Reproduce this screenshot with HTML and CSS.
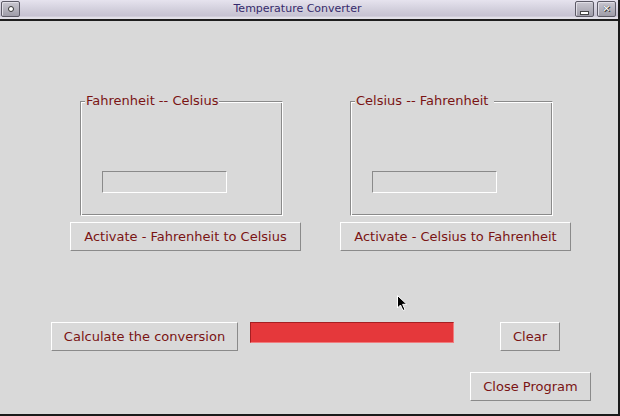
FILE: index.html
```html
<!DOCTYPE html>
<html>
<head>
<meta charset="utf-8">
<link rel="stylesheet" href="styles.css">
</head>
<body>
<div class="window">
  <div class="titlebar">
    <div class="tb-btn tb-menu"><span class="dot"></span></div>
    <div class="title">Temperature Converter</div>
    <div class="tb-right">
      <div class="tb-btn"><span class="minbar"></span></div>
      <div class="tb-btn"><span class="xmark">✕</span></div>
    </div>
  </div>
  <div class="content">
    <div class="row-frames">
      <div class="col">
        <div class="lframe">
          <span class="legend">Fahrenheit -- Celsius</span>
          <div class="entry"></div>
        </div>
        <div class="btn btn-wide">Activate - Fahrenheit to Celsius</div>
      </div>
      <div class="col">
        <div class="lframe">
          <span class="legend">Celsius -- Fahrenheit&nbsp;</span>
          <div class="entry"></div>
        </div>
        <div class="btn btn-wide">Activate - Celsius to Fahrenheit</div>
      </div>
    </div>
    <div class="row-calc">
      <div class="btn btn-calc">Calculate the conversion</div>
      <div class="result"></div>
      <div class="btn btn-clear">Clear</div>
    </div>
    <div class="row-close">
      <div class="btn btn-close">Close Program</div>
    </div>
    <svg class="cursor" width="12" height="18" viewBox="0 0 12 18">
      <path d="M0.5 0.5 L0.5 13 L3.5 10 L6 15.5 L8 14.5 L5.6 9.3 L9.8 9.3 Z" fill="#000" stroke="#fff" stroke-width="1"/>
    </svg>
  </div>
</div>
</body>
</html>
```
FILE: styles.css
```css
html, body {
  margin: 0;
  padding: 0;
  background: #d9d9d9;
}
.window {
  width: 620px;
  height: 416px;
  box-sizing: border-box;
  border-right: 2px solid #1a1a1a;
  border-bottom: 2px solid #1a1a1a;
  background: #d9d9d9;
  font-family: "DejaVu Sans", sans-serif;
  position: relative;
  overflow: hidden;
}
.titlebar {
  height: 21px;
  box-sizing: border-box;
  background: linear-gradient(#e6e3ee, #d2cfdc 50%, #c6c2d2 85%, #e2e0e8 90%);
  border-bottom: 2px solid #1e1e1e;
  display: flex;
  align-items: flex-start;
  padding: 1px 2px 0 1px;
}
.title {
  flex: 1;
  text-align: center;
  font-size: 11px;
  color: #352a6c;
  line-height: 16px;
}
.tb-right {
  display: flex;
  gap: 3px;
}
.tb-btn {
  width: 19px;
  height: 16px;
  box-sizing: border-box;
  border: 1px solid #5c5a66;
  border-radius: 2px;
  background: linear-gradient(#c9c7d0, #9e9ca8);
  display: flex;
  align-items: center;
  justify-content: center;
  box-shadow: inset 1px 1px 0 #e0dee6;
}
.dot {
  width: 4px;
  height: 4px;
  border: 1px solid #333;
  border-radius: 50%;
  background: #fff;
}
.minbar {
  width: 7px;
  height: 2px;
  background: #fff;
  margin-top: 7px;
  box-shadow: 0 0 0 1px #444;
}
.xmark {
  color: #fff;
  font-size: 10px;
  font-weight: bold;
  line-height: 1;
  text-shadow: 0 0 1px #222, 1px 1px 0 #333;
}
.content {
  position: relative;
  height: 393px;
  padding-top: 73px;
  box-sizing: border-box;
}
.row-frames {
  display: flex;
  gap: 40px;
  padding-left: 70px;
}
.col {
  width: 230px;
  display: flex;
  flex-direction: column;
}
.lframe {
  position: relative;
  margin-left: 10px;
  width: 203px;
  height: 115px;
  box-sizing: border-box;
  margin-top: 7px;
  border: 1px solid;
  border-color: #8a8a8a #fff #fff #8a8a8a;
  box-shadow: inset 1px 1px 0 #fff, inset -1px -1px 0 #8a8a8a;
}
.legend {
  position: absolute;
  left: 4px;
  top: -9px;
  background: #d9d9d9;
  padding: 0 1px;
  font-size: 13px;
  line-height: 16px;
  color: #7a1414;
}
.entry {
  position: absolute;
  left: 21px;
  top: 69px;
  width: 125px;
  height: 22px;
  box-sizing: border-box;
  border: 1px solid;
  border-color: #8a8a8a #fff #fff #8a8a8a;
  background: #d9d9d9;
}
.btn {
  box-sizing: border-box;
  height: 29px;
  border: 1px solid;
  border-color: #fff #8a8a8a #8a8a8a #fff;
  background: #d9d9d9;
  color: #7a1414;
  font-size: 13px;
  line-height: 27px;
  text-align: center;
  white-space: nowrap;
}
.btn-wide {
  margin-top: 6px;
  width: 231px;
}
.row-calc {
  display: flex;
  align-items: flex-start;
  padding-left: 51px;
  margin-top: 71px;
}
.btn-calc {
  width: 187px;
}
.result {
  margin-left: 12px;
  width: 204px;
  height: 21px;
  box-sizing: border-box;
  background: #e5383b;
  border: 1px solid;
  border-color: #a51f22 #f07c7e #f07c7e #a51f22;
}
.btn-clear {
  margin-left: 46px;
  width: 60px;
}
.row-close {
  display: flex;
  padding-left: 470px;
  margin-top: 21px;
}
.btn-close {
  width: 121px;
}
.cursor {
  position: absolute;
  left: 397px;
  top: 274px;
}
```
